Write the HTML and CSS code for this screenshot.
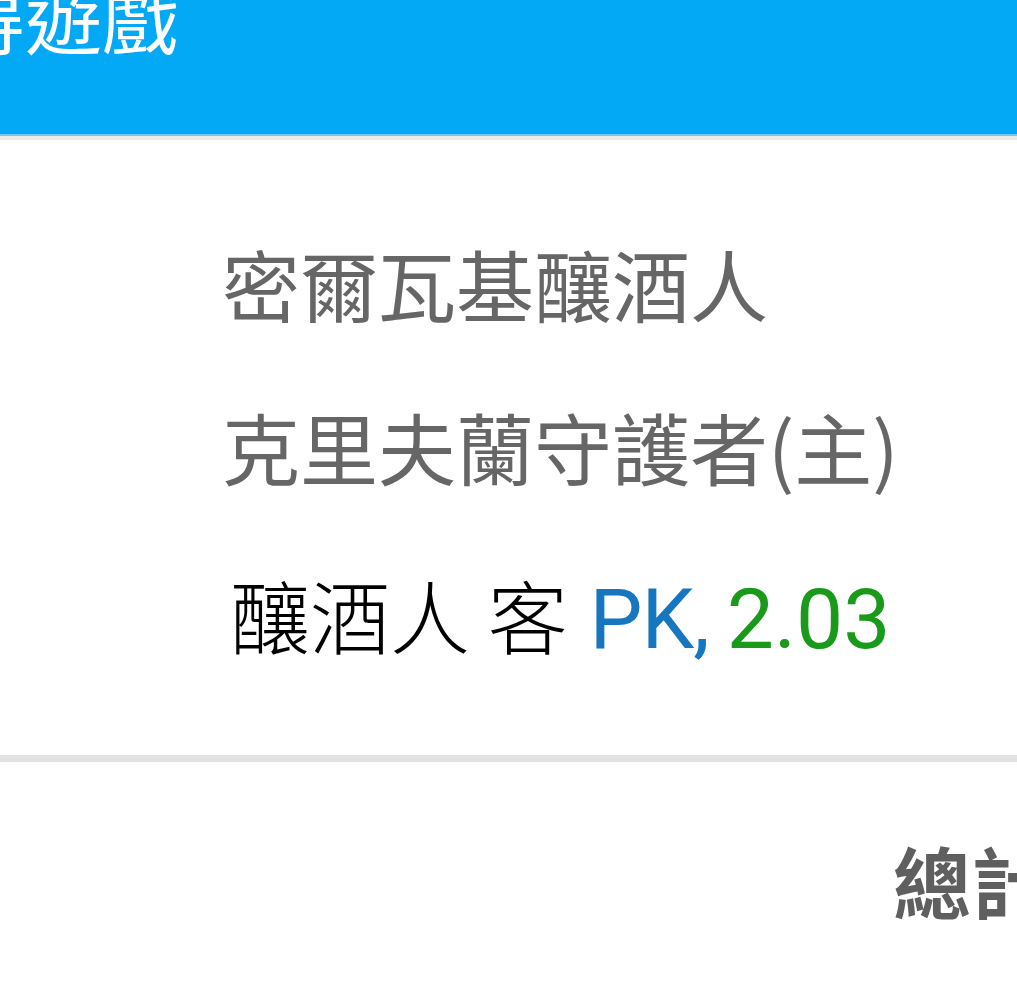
FILE: index.html
```html
<!DOCTYPE html>
<html lang="zh-Hant">
<head>
<meta charset="utf-8">
<title>遊戲</title>
<link rel="stylesheet" href="styles.css">
</head>
<body>
<header class="appbar">
  <div class="appbar-title">得遊戲</div>
</header>
<section class="match">
  <div class="team team-away">密爾瓦基釀酒人</div>
  <div class="team team-home">克里夫蘭守護者(主)</div>
  <div class="pick"><span class="pick-team">釀酒人 客</span> <span class="pick-type">PK,</span> <span class="pick-odds">2.03</span></div>
</section>
<section class="summary">
  <div class="summary-title">總計</div>
</section>
</body>
</html>
```
FILE: styles.css
```css
html, body {
  margin: 0;
  padding: 0;
  background: #ffffff;
}
body {
  width: 1017px;
  height: 1000px;
  overflow: hidden;
  font-family: "Noto Sans CJK TC", "Noto Sans", sans-serif;
}
.appbar {
  height: 136px;
  background: #03a9f4;
  border-bottom: 4px solid #ebe8e6;
  box-shadow: inset 0 -2px 0 #6fc9f2;
  overflow: hidden;
}
.appbar-title {
  color: #ffffff;
  font-size: 77px;
  line-height: 78px;
  margin-top: -23px;
  margin-left: -52px;
  white-space: nowrap;
}
.match {
  padding: 62px 0 54px 222px;
  border-bottom: 7px solid #e2e2e2;
}
.team {
  color: #666666;
  font-size: 78px;
  line-height: 163px;
  white-space: nowrap;
}
.pick {
  margin-top: 4px;
  padding-left: 8px;
  font-size: 80px;
  line-height: 163px;
  white-space: nowrap;
  color: #000000;
}
.pick-team {
  font-weight: 300;
  margin-right: 4px;
}
.pick-type {
  font-family: Roboto, "Noto Sans", sans-serif;
  font-size: 84px;
  color: #1677c0;
  letter-spacing: -1px;
}
.pick-odds {
  font-family: Roboto, "Noto Sans", sans-serif;
  font-size: 84px;
  color: #1a9a1a;
}
.summary {
  padding: 76px 0 0 893px;
}
.summary-title {
  color: #5f5f5f;
  font-weight: 700;
  font-size: 78px;
  line-height: 84px;
  white-space: nowrap;
}
```
